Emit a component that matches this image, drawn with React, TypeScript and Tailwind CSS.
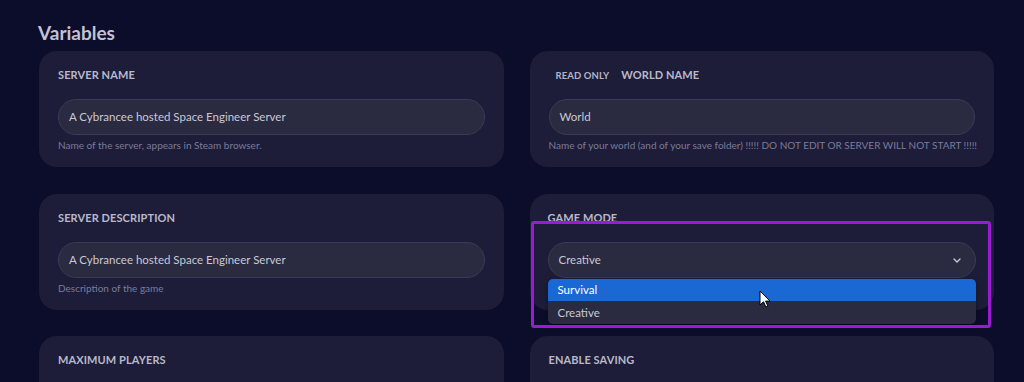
import type { FC, JSX } from "react";

interface IField {
    label: string;
    value?: string;
    help?: string;
    readOnly?: boolean;
}

const font = { fontFamily: "Lato, 'Noto Sans', sans-serif" };

const Label: FC<{ text: string; readOnly?: boolean }> = ({ text, readOnly }): JSX.Element => (
    <div className="flex items-center h-4 gap-3">
        {readOnly && (
            <span className="text-[9.5px] font-bold text-[#b4b4c6] pl-[7px] pt-[2px] tracking-[0.1px]">READ ONLY</span>
        )}
        <span className="text-[11px] font-bold text-[#b9b9ca] tracking-[0.1px]">{text}</span>
    </div>
);

const FieldCard: FC<{ field: IField; className?: string }> = ({ field, className = "" }): JSX.Element => (
    <div className={`bg-[#1d1d39] rounded-[18px] pt-4 px-[19px] pb-[15px] ${className}`}>
        <Label text={field.label} readOnly={field.readOnly} />
        {field.value !== undefined && (
            <div className="mt-4 h-9 rounded-full bg-[#2a2a40] border border-[#3b3b55] flex items-center px-[10px] text-[11.5px] text-[#c9c9d6]">
                {field.value}
            </div>
        )}
        {field.help && (
            <p className="mt-[3px] text-[10px] leading-[14px] text-[#7b7b98] whitespace-nowrap">{field.help}</p>
        )}
        {field.value === undefined && <div className="h-[60px]" />}
    </div>
);

const SelectCard: FC = (): JSX.Element => (
    <div className="relative bg-[#1d1d39] rounded-[18px] pt-4 px-[18px] pb-[31px]">
        <Label text="GAME MODE" />
        <div className="relative mt-4">
            <div className="h-9 rounded-full bg-[#2a2a40] border border-[#3b3b55] flex items-center justify-between pl-[10px] pr-[14px] text-[11.5px] text-[#c9c9d6]">
                <span>Creative</span>
                <svg width="8" height="5" viewBox="0 0 8 5" fill="none">
                    <path d="M1 1l3 3 3-3" stroke="#c9c9d6" strokeWidth="1.4" strokeLinecap="round" strokeLinejoin="round" />
                </svg>
            </div>
            <div className="absolute left-0 right-0 top-[37px] z-10 rounded-[5px] overflow-hidden bg-[#2a2a40] shadow-[0_2px_6px_rgba(0,0,0,0.4)] text-[11.5px]">
                <div className="h-[22px] bg-[#1a68d4] text-white flex items-center px-[10px]">Survival</div>
                <div className="h-[23px] text-[#c9c9d6] flex items-center px-[10px]">Creative</div>
            </div>
        </div>
    </div>
);

export default function App(): JSX.Element {
    const left: IField[] = [
        { label: "SERVER NAME", value: "A Cybrancee hosted Space Engineer Server", help: "Name of the server, appears in Steam browser." },
        { label: "SERVER DESCRIPTION", value: "A Cybrancee hosted Space Engineer Server", help: "Description of the game" },
        { label: "MAXIMUM PLAYERS" },
    ];

    return (
        <div className="relative h-[382px] overflow-hidden bg-[#0c0d2b] pl-[39px] pr-[30px] pt-[20px]" style={font}>
            <h2 className="text-[19px] font-bold text-[#c2c2d2] leading-[26px] mb-[5px] -ml-[1px]">Variables</h2>
            <div className="grid grid-cols-2 gap-x-[26px] gap-y-[27px]">
                <FieldCard field={left[0]} />
                <FieldCard
                    field={{
                        label: "WORLD NAME",
                        value: "World",
                        readOnly: true,
                        help: "Name of your world (and of your save folder) !!!!! DO NOT EDIT OR SERVER WILL NOT START !!!!!",
                    }}
                />
                <FieldCard field={left[1]} className="pb-[14px]" />
                <SelectCard />
                <FieldCard field={left[2]} className="-mt-px" />
                <FieldCard field={{ label: "ENABLE SAVING" }} className="-mt-px" />
            </div>

            {/* annotation frame */}
            <div className="absolute left-[531px] top-[221px] w-[460px] h-[107px] border-[3px] border-[#9a1bd2] rounded-[3px] z-20 pointer-events-none" />

            {/* mouse cursor */}
            <svg className="absolute left-[759px] top-[290px] z-30" width="12" height="18" viewBox="0 0 12 18">
                <path d="M1 1v14l3.5-3.2 2.4 5.2 2-0.9-2.3-5H11z" fill="#fff" stroke="#000" strokeWidth="1" strokeLinejoin="round" />
            </svg>
        </div>
    );
}
